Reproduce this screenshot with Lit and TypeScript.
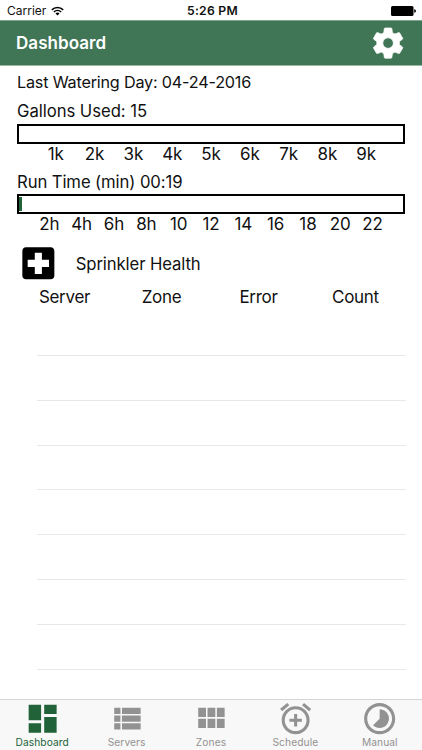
import { LitElement, html, css } from "lit";
import { customElement, property } from "lit/decorators.js";

const ICONS: Record<string, string> = {
  settings:
    "M19.43 12.98c.04-.32.07-.64.07-.98s-.03-.66-.07-.98l2.11-1.65c.19-.15.24-.42.12-.64l-2-3.46c-.12-.22-.39-.3-.61-.22l-2.49 1c-.52-.4-1.08-.73-1.69-.98l-.38-2.65C14.46 2.18 14.25 2 14 2h-4c-.25 0-.46.18-.49.42l-.38 2.65c-.61.25-1.17.59-1.69.98l-2.49-1c-.23-.09-.49 0-.61.22l-2 3.46c-.13.22-.07.49.12.64l2.11 1.65c-.04.32-.07.65-.07.98s.03.66.07.98l-2.11 1.65c-.19.15-.24.42-.12.64l2 3.46c.12.22.39.3.61.22l2.49-1c.52.4 1.08.73 1.69.98l.38 2.65c.03.24.24.42.49.42h4c.25 0 .46-.18.49-.42l.38-2.65c.61-.25 1.17-.59 1.69-.98l2.49 1c.23.09.49 0 .61-.22l2-3.46c.12-.22.07-.49-.12-.64l-2.11-1.65zM12 15.5c-1.93 0-3.5-1.57-3.5-3.5s1.57-3.5 3.5-3.5 3.5 1.57 3.5 3.5-1.57 3.5-3.5 3.5z",
  dashboard: "M3 13h8V3H3v10zm0 8h8v-6H3v6zm10 0h8V11h-8v10zm0-18v6h8V3h-8z",
  list: "M4 14h4v-4H4v4zm0 5h4v-4H4v4zM4 9h4V5H4v4zm5 5h12v-4H9v4zm0 5h12v-4H9v4zM9 5v4h12V5H9z",
  module: "M4 11h5V5H4v6zm0 7h5v-6H4v6zm6 0h5v-6h-5v6zm6 0h5v-6h-5v6zm-6-7h5V5h-5v6zm6-6v6h5V5h-5z",
  alarm:
    "M7.88 3.39L6.6 1.86 2 5.71l1.29 1.53 4.59-3.85zM22 5.72l-4.6-3.86-1.29 1.53 4.6 3.86L22 5.72zM12 4c-4.97 0-9 4.03-9 9s4.02 9 9 9c4.97 0 9-4.03 9-9s-4.03-9-9-9zm0 16c-3.87 0-7-3.13-7-7s3.13-7 7-7 7 3.13 7 7-3.13 7-7 7zm1-11h-2v3H8v2h3v3h2v-3h3v-2h-3V9z",
  timelapse:
    "M16.24 7.76C15.07 6.59 13.54 6 12 6v6l-4.24 4.24c2.34 2.34 6.14 2.34 8.49 0 2.34-2.34 2.34-6.14-.01-8.48zM12 2C6.48 2 2 6.48 2 12s4.48 10 10 10 10-4.48 10-10S17.52 2 12 2zm0 18c-4.42 0-8-3.58-8-8s3.58-8 8-8 8 3.58 8 8-3.58 8-8 8z",
  hospital:
    "M19 3H5c-1.1 0-1.99.9-1.99 2L3 19c0 1.1.9 2 2 2h14c1.1 0 2-.9 2-2V5c0-1.1-.9-2-2-2zm-1 11h-4v4h-4v-4H6v-4h4V6h4v4h4v4z",
};

@customElement("md-icon")
export class MdIcon extends LitElement {
  @property() name = "";
  static styles = css`
    :host { display: block; flex: none; width: 37.3px; height: 37.3px; }
    svg { display: block; width: 100%; height: 100%; fill: currentColor; }
    :host([name="settings"]) svg { stroke: currentColor; stroke-width: 0.5; }
  `;
  render() {
    return html`<svg viewBox="0 0 24 24"><path d=${ICONS[this.name]}></path></svg>`;
  }
}

@customElement("gauge-bar")
export class GaugeBar extends LitElement {
  @property({ type: Number }) percent = 0;
  @property({ type: Array }) labels: string[] = [];
  static styles = css`
    :host { display: block; }
    .track { box-sizing: border-box; height: 20.4px; border: 2px solid #000; padding: 1px 0; display: flex; background: #fff; }
    .fill { background: #226239; }
    .labels { display: flex; height: 20px; line-height: 20px; font-size: 17px; letter-spacing: -0.1px; }
    .edge { flex: 0.5; }
    .label { flex: 1 1 0; min-width: 0; display: flex; justify-content: center; }
  `;
  render() {
    return html`
      <div class="track"><div class="fill" style="width:${this.percent}%"></div></div>
      <div class="labels">
        <span class="edge"></span>
        ${this.labels.map((l) => html`<span class="label">${l}</span>`)}
        <span class="edge"></span>
      </div>
    `;
  }
}

const TABS = [
  ["dashboard", "Dashboard"],
  ["list", "Servers"],
  ["module", "Zones"],
  ["alarm", "Schedule"],
  ["timelapse", "Manual"],
];

@customElement("app-root")
export class AppRoot extends LitElement {
  static styles = css`
    :host {
      display: flex; flex-direction: column; width: 422px; height: 750px; overflow: hidden;
      background: #fff; color: #111; font-family: Inter, "Liberation Sans", sans-serif;
    }
    .status {
      display: grid; grid-template-columns: 1fr auto 1fr; align-items: center;
      height: 20px; padding: 1px 6px 0 7px; box-sizing: border-box; font-size: 12px; flex: none; line-height: 18px;
    }
    .carrier { display: flex; align-items: center; gap: 5px; }
    .wifi { width: 13px; height: 10px; }
    .time { font-weight: 600; font-size: 12.2px; letter-spacing: 0.25px; padding-left: 2px; }
    .battery { justify-self: end; width: 25px; height: 10px; }
    .nav {
      display: flex; align-items: center; justify-content: space-between; box-sizing: border-box; flex: none;
      height: 46px; padding: 0 16px; background: #407555; color: #fff;
      border-top: 1px solid #7fa48d; border-bottom: 1px solid #9abaa6;
    }
    .gear { width: 36.2px; height: 36.2px; }
    .title { font-size: 17px; font-weight: 600; line-height: 22px; letter-spacing: 0.05px; }
    .content { flex: 1; padding: 6px 17px 0; min-height: 0; }
    .line { height: 20px; line-height: 20px; font-size: 16.7px; white-space: nowrap; }
    .date { font-size: 16.2px; letter-spacing: -0.2px; }
    .used { margin: 9px 0 2.6px; letter-spacing: -0.05px; }
    .run { margin: 7.9px 0 2px; letter-spacing: -0.1px; }
    .health { display: flex; align-items: center; gap: 16px; height: 43px; margin-top: 8px; }
    .health .line { letter-spacing: -0.1px; }
    .cross { width: 42.7px; height: 42.7px; color: #000; }
    .heads { display: grid; grid-template-columns: repeat(4, 1fr); text-align: center; height: 24px; line-height: 24px; font-size: 17px; letter-spacing: -0.3px; margin: 0 1px 0 -1px; }
    .rows { margin: 2px -1px 0 20px; }
    .row { box-sizing: border-box; height: 44.8px; border-bottom: 1px solid #e8e8e8; }
    .tabs {
      display: grid; grid-template-columns: repeat(5, 1fr); flex: none; box-sizing: border-box; height: 51px;
      border-top: 1px solid #d5d5d5; background: #f8f8f8; color: #929292;
    }
    .tab { display: flex; flex-direction: column; align-items: center; font-size: 10.2px; line-height: 12px; letter-spacing: 0.1px; }
    .tab span { margin-top: -1px; }
    .active { color: #226239; }
  `;

  render() {
    return html`
      <div class="status">
        <div class="carrier">
          <span>Carrier</span>
          <svg class="wifi" viewBox="0 0 13 10">
            <path d="M.8 3.8a8.2 8.2 0 0 1 11.4 0M2.9 6a5.2 5.2 0 0 1 7.2 0" fill="none" stroke="#000" stroke-width="1.6"></path>
            <path d="M4.5 7.5a3 3 0 0 1 4 0L6.5 9.6z"></path>
          </svg>
        </div>
        <div class="time">5:26 PM</div>
        <svg class="battery" viewBox="0 0 25 10">
          <rect width="22.5" height="10" rx="1.5"></rect>
          <path d="M23.2 3.2q1.8.2 1.8 1.8t-1.8 1.8z"></path>
        </svg>
      </div>
      <div class="nav">
        <span class="title">Dashboard</span>
        <md-icon class="gear" name="settings"></md-icon>
      </div>
      <div class="content">
        <div class="line date">Last Watering Day: 04-24-2016</div>
        <div class="line used">Gallons Used: 15</div>
        <gauge-bar .percent=${0} .labels=${["1k", "2k", "3k", "4k", "5k", "6k", "7k", "8k", "9k"]}></gauge-bar>
        <div class="line run">Run Time (min) 00:19</div>
        <gauge-bar .percent=${0.8} .labels=${["2h", "4h", "6h", "8h", "10", "12", "14", "16", "18", "20", "22"]}></gauge-bar>
        <div class="health">
          <md-icon class="cross" name="hospital"></md-icon>
          <span class="line">Sprinkler Health</span>
        </div>
        <div class="heads"><span>Server</span><span>Zone</span><span>Error</span><span>Count</span></div>
        <div class="rows">${Array.from({ length: 8 }, () => html`<div class="row"></div>`)}</div>
      </div>
      <div class="tabs">
        ${TABS.map(
          ([icon, label], i) => html`<div class="tab ${i === 0 ? "active" : ""}">
            <md-icon name=${icon}></md-icon><span>${label}</span>
          </div>`
        )}
      </div>
    `;
  }
}
